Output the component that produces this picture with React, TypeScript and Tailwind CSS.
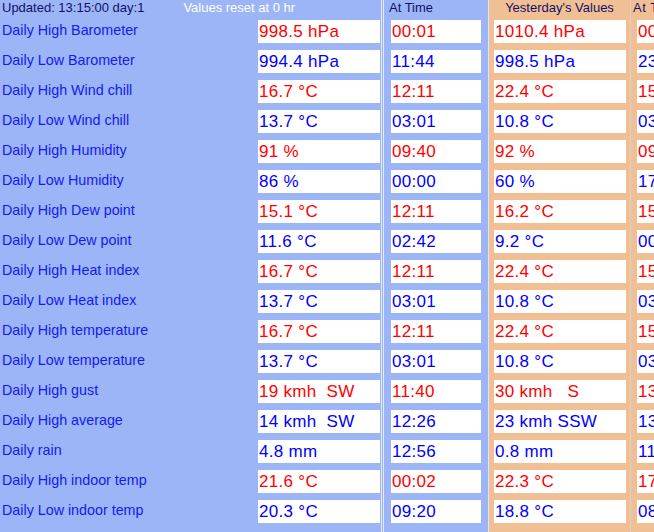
const rows = [
  { label: "Daily High Barometer", today: "998.5 hPa", at: "00:01", yday: "1010.4 hPa", yat: "00:05", high: true },
  { label: "Daily Low Barometer", today: "994.4 hPa", at: "11:44", yday: "998.5 hPa", yat: "23:59", high: false },
  { label: "Daily High Wind chill", today: "16.7 °C", at: "12:11", yday: "22.4 °C", yat: "15:16", high: true },
  { label: "Daily Low Wind chill", today: "13.7 °C", at: "03:01", yday: "10.8 °C", yat: "03:47", high: false },
  { label: "Daily High Humidity", today: "91 %", at: "09:40", yday: "92 %", yat: "09:03", high: true },
  { label: "Daily Low Humidity", today: "86 %", at: "00:00", yday: "60 %", yat: "17:22", high: false },
  { label: "Daily High Dew point", today: "15.1 °C", at: "12:11", yday: "16.2 °C", yat: "15:16", high: true },
  { label: "Daily Low Dew point", today: "11.6 °C", at: "02:42", yday: "9.2 °C", yat: "00:41", high: false },
  { label: "Daily High Heat index", today: "16.7 °C", at: "12:11", yday: "22.4 °C", yat: "15:16", high: true },
  { label: "Daily Low Heat index", today: "13.7 °C", at: "03:01", yday: "10.8 °C", yat: "03:47", high: false },
  { label: "Daily High temperature", today: "16.7 °C", at: "12:11", yday: "22.4 °C", yat: "15:16", high: true },
  { label: "Daily Low temperature", today: "13.7 °C", at: "03:01", yday: "10.8 °C", yat: "03:47", high: false },
  { label: "Daily High gust", today: "19 kmh  SW", at: "11:40", yday: "30 kmh   S", yat: "13:22", high: true },
  { label: "Daily High average", today: "14 kmh  SW", at: "12:26", yday: "23 kmh SSW", yat: "13:07", high: false },
  { label: "Daily rain", today: "4.8 mm", at: "12:56", yday: "0.8 mm", yat: "11:58", high: false },
  { label: "Daily High indoor temp", today: "21.6 °C", at: "00:02", yday: "22.3 °C", yat: "17:30", high: true },
  { label: "Daily Low indoor temp", today: "20.3 °C", at: "09:20", yday: "18.8 °C", yat: "08:14", high: false },
];

const Box = ({ text, high, width }: { text: string; high: boolean; width: string }) => (
  <div
    className={`${width} h-[23px] bg-white pl-[1px] flex items-center whitespace-pre text-[17px] tracking-[0.3px] leading-none ${
      high ? "text-[#ff0000]" : "text-[#0000ff]"
    }`}
  >
    {text}
  </div>
);

const App = () => {
  return (
    <div className="w-[654px] h-[532px] overflow-hidden flex font-['Liberation_Sans',Arial,sans-serif]">
      {/* labels + today's values */}
      <div className="w-[381px] shrink-0 bg-[#9bb5f6]">
        <div className="h-[20px] flex text-[13px] leading-[16px]">
          <span className="pl-[2px] text-[#10106a]">Updated: 13:15:00 day:1</span>
          <span className="ml-[39px] text-white">Values reset at 0 hr</span>
        </div>
        {rows.map((row, i) => (
          <div key={i} className="h-[30px]">
            <div className="h-[23px] flex items-center">
              <span className="flex-1 pl-[2px] pb-[1px] text-[14.3px] text-[#1717f5]">{row.label}</span>
              <div className="mr-[1px]">
                <Box text={row.today} high={row.high} width="w-[122px]" />
              </div>
            </div>
          </div>
        ))}
      </div>

      {/* at time */}
      <div className="w-[107px] shrink-0 bg-[#9bb5f6] border-l-[3px] border-double border-[#e3e9f9]">
        <div className="h-[20px] pl-[5px] text-[13px] leading-[16px] text-[#10106a]">At Time</div>
        {rows.map((row, i) => (
          <div key={i} className="h-[30px] pl-[7px]">
            <Box text={row.at} high={row.high} width="w-[90px]" />
          </div>
        ))}
      </div>

      {/* yesterday */}
      <div className="w-[142px] shrink-0 bg-[#f0c094] border-l border-[#dfe5f8]">
        <div className="h-[20px] text-center text-[13px] leading-[16px] text-[#10106a]">Yesterday's Values</div>
        {rows.map((row, i) => (
          <div key={i} className="h-[30px] pl-[5px]">
            <Box text={row.yday} high={row.high} width="w-[132px]" />
          </div>
        ))}
      </div>

      {/* yesterday at time */}
      <div className="w-[120px] shrink-0 bg-[#f0c094] border-l border-[#d6d3cf]">
        <div className="h-[20px] pl-[2px] text-[13px] leading-[16px] tracking-[0.5px] text-[#10106a]">At Time</div>
        {rows.map((row, i) => (
          <div key={i} className="h-[30px] pl-[6px]">
            <Box text={row.yat} high={row.high} width="w-[90px]" />
          </div>
        ))}
      </div>
    </div>
  );
};

export default App;
